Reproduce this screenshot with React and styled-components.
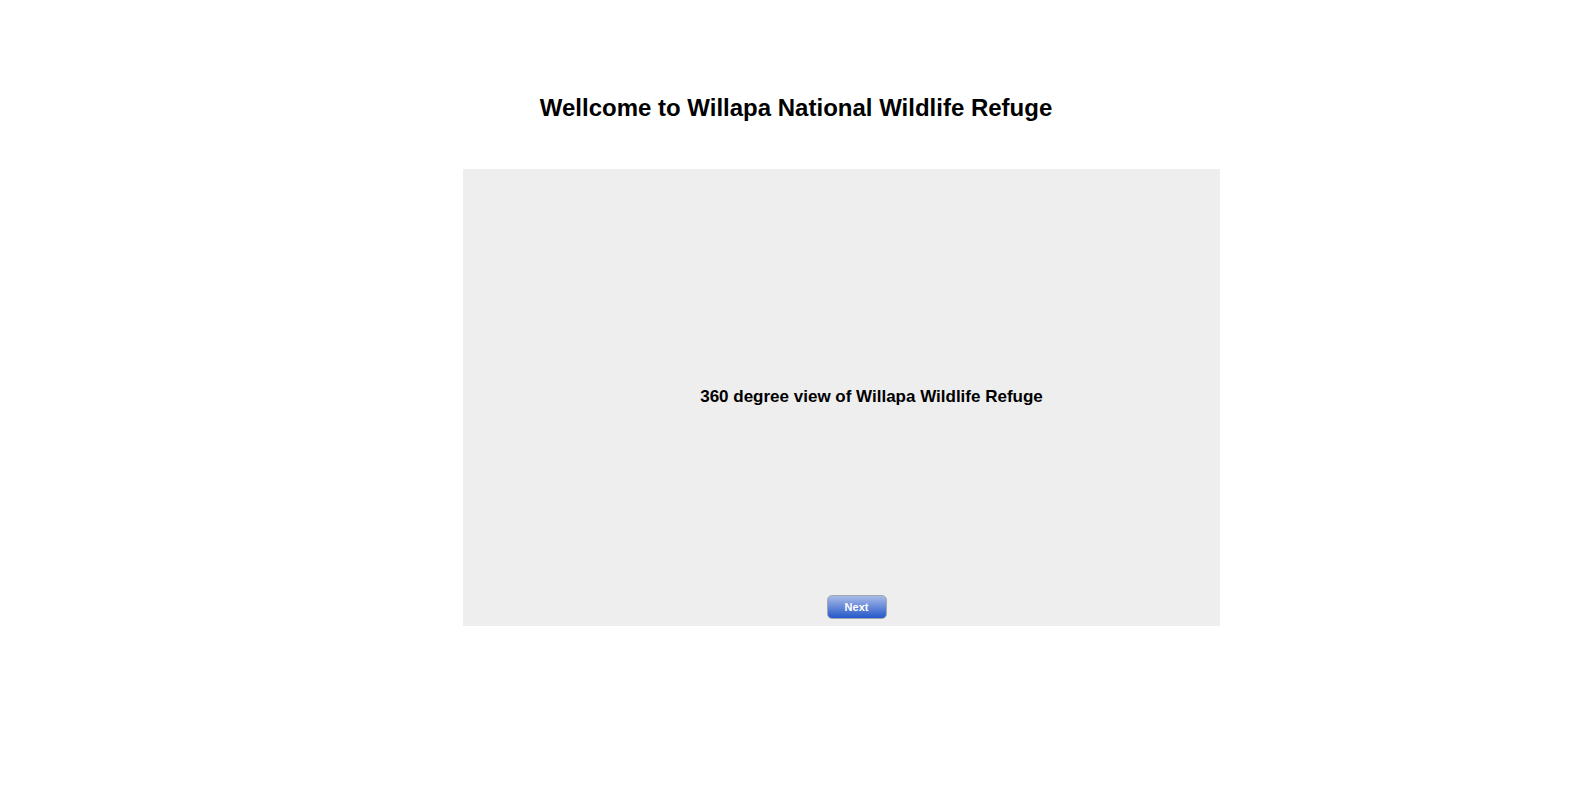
import React from "react";
import styled, { createGlobalStyle } from "styled-components";

const GlobalStyle = createGlobalStyle`
  body {
    margin: 0;
    background: #fff;
    color: #000;
    font-family: "Liberation Sans", Arial, sans-serif;
  }
`;

const Page = styled.main`
  display: flex;
  flex-direction: column;
  align-items: center;
  padding: 94px 0 40px;
`;

const Title = styled.h1`
  margin: 0 0 47px;
  font-size: 24px;
  line-height: 28px;
`;

const Viewer = styled.section`
  display: flex;
  flex-direction: column;
  align-items: center;
  box-sizing: border-box;
  width: 757px;
  max-width: 100%;
  min-height: 457px;
  margin-left: 91px;
  padding: 218px 0 7px;
  background: #eee;
`;

const Caption = styled.h2`
  margin: 0 0 auto;
  padding-left: 60px;
  font-size: 17px;
  line-height: 20px;
`;

const NextButton = styled.button`
  width: 60px;
  height: 24px;
  margin-left: 30px;
  padding: 0 0 1px;
  border: 1px solid #a3a6af;
  border-radius: 5px;
  background: linear-gradient(#a9bbe8, #2558c9);
  color: #fff;
  font: bold 11px/20px "Liberation Sans", Arial, sans-serif;
  cursor: pointer;
`;

export default function App() {
  return (
    <Page>
      <GlobalStyle />
      <Title>Wellcome to Willapa National Wildlife Refuge</Title>
      <Viewer>
        <Caption>360 degree view of Willapa Wildlife Refuge</Caption>
        <NextButton type="button">Next</NextButton>
      </Viewer>
    </Page>
  );
}
